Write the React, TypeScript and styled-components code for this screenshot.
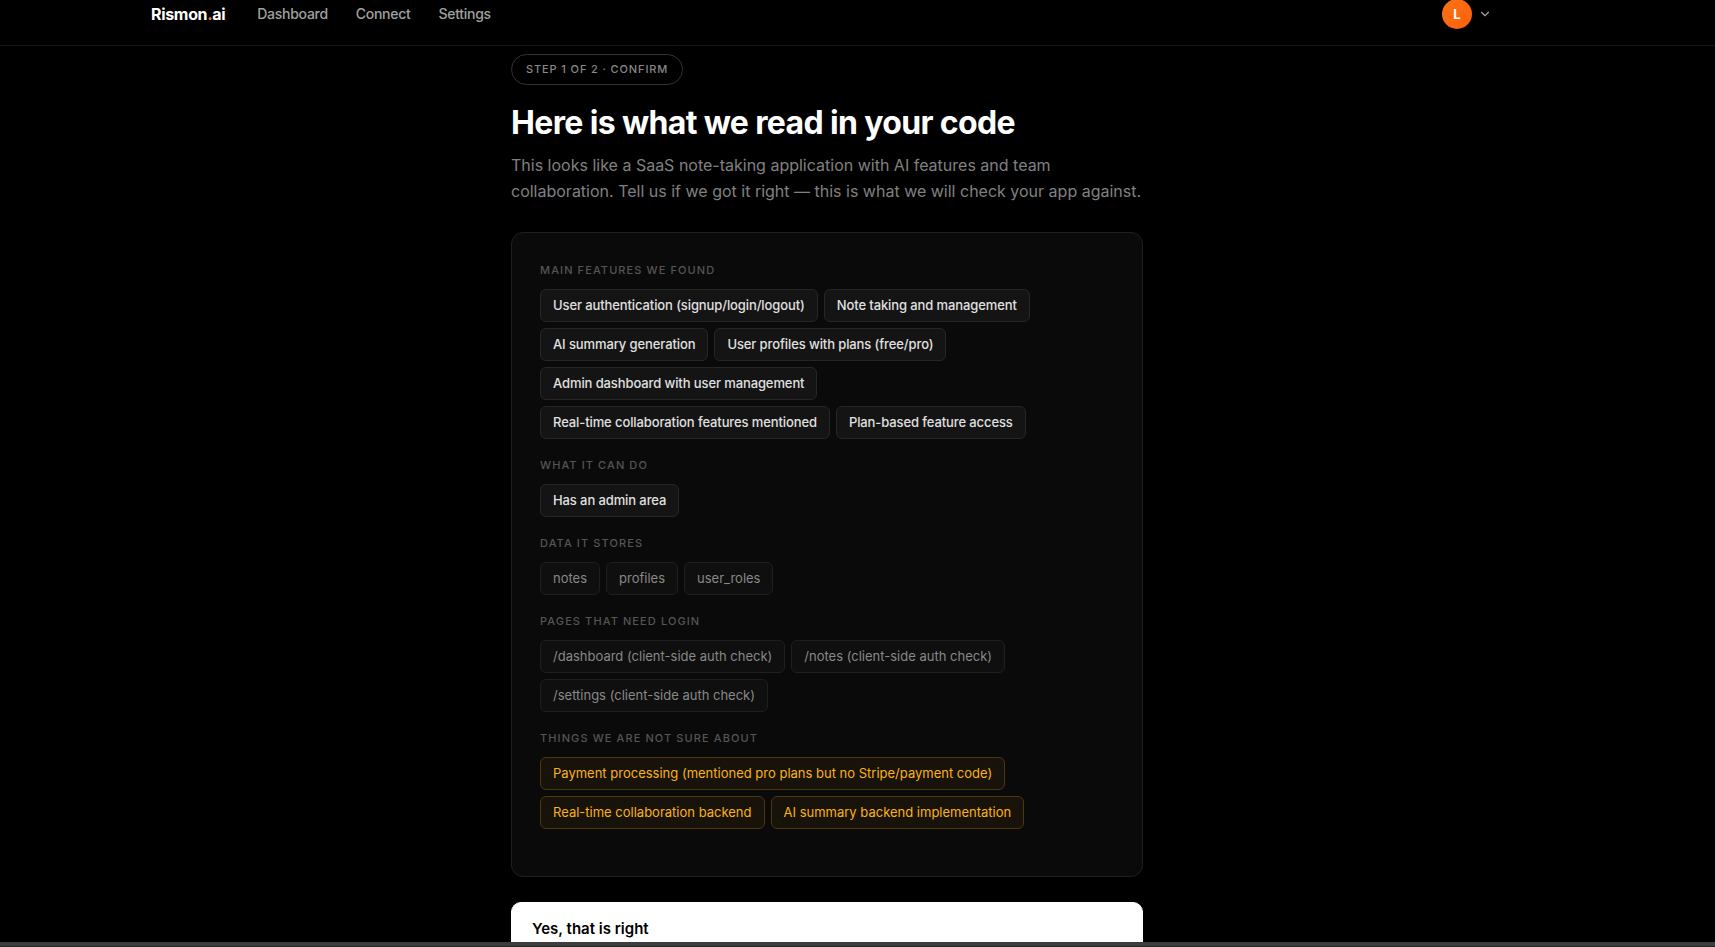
import React from "react";
import styled, { createGlobalStyle, css } from "styled-components";
import { ChevronDown } from "lucide-react";

const GlobalStyle = createGlobalStyle`
  *, *::before, *::after { box-sizing: border-box; }
  body {
    margin: 0;
    background: #000;
    color: #fff;
    font-family: Inter, "Liberation Sans", sans-serif;
  }
  button { font: inherit; cursor: pointer; }
`;

const Page = styled.div`
  display: grid;
  grid-template-rows: auto minmax(0, 1fr) auto;
  height: 100vh;
  overflow: hidden;
`;

const Header = styled.header`
  height: 46px;
  padding: 0 61px 17px 0;
  border-bottom: 1px solid #1a1a1a;
`;

const HeaderInner = styled.div`
  display: flex;
  align-items: center;
  height: 28px;
  max-width: 1400px;
  margin: 0 auto;
  padding: 0 24px;
`;

const Brand = styled.a`
  margin-right: 32px;
  color: #fff;
  font-size: 16px;
  font-weight: 700;
  letter-spacing: -0.02em;
  text-decoration: none;
`;

const BrandDot = styled.span`
  color: #f97316;
`;

const Nav = styled.nav`
  display: flex;
  gap: 28px;
  padding-bottom: 2px;
`;

const NavLink = styled.a`
  color: #a0a0a0;
  font-size: 14px;
  font-weight: 500;
  letter-spacing: -0.02em;
  text-decoration: none;
`;

const AccountButton = styled.button`
  display: flex;
  align-items: center;
  gap: 6px;
  margin-left: auto;
  padding: 0 11px 0 0;
  border: 0;
  background: none;
  color: #a0a0a0;
`;

const Avatar = styled.span`
  display: grid;
  place-items: center;
  width: 30px;
  height: 30px;
  border-radius: 50%;
  background: linear-gradient(135deg, #f97316, #ff5f0a);
  color: #fff;
  font-size: 13px;
  font-weight: 700;
`;

const Main = styled.main`
  overflow: hidden;
  padding: 8px 61px 0 0;
`;

const Content = styled.div`
  max-width: 680px;
  margin: 0 auto;
  padding: 0 24px;
`;

const StepBadge = styled.div`
  width: fit-content;
  margin-bottom: 20px;
  padding: 6px 14px;
  border: 1px solid #333;
  border-radius: 16px;
  color: #888;
  font-size: 11px;
  font-weight: 500;
  line-height: 17px;
  letter-spacing: 0.08em;
  text-transform: uppercase;
`;

const Title = styled.h1`
  margin: 0 0 11px;
  font-size: 32px;
  font-weight: 700;
  line-height: 36px;
  letter-spacing: -0.02em;
`;

const Lead = styled.p`
  margin: 0 0 28px;
  color: #808080;
  font-size: 16px;
  line-height: 26px;
`;

const Card = styled.div`
  margin-bottom: 25px;
  padding: 29px 28px;
  border: 1px solid #1f1f1f;
  border-radius: 12px;
  background: #0a0a0a;
`;

const Group = styled.section`
  margin-bottom: 18px;
`;

const GroupLabel = styled.h2`
  margin: 0 0 10px;
  color: #555;
  font-size: 11px;
  font-weight: 500;
  line-height: 17px;
  letter-spacing: 0.1em;
  text-transform: uppercase;
`;

const ChipList = styled.ul`
  display: flex;
  flex-wrap: wrap;
  gap: 6px;
  margin: 0;
  padding: 0 8px 0 0;
  list-style: none;
`;

type Tone = "strong" | "muted" | "warning";

const chipTones = {
  strong: css`
    border-color: #262626;
    background: #141414;
    color: #e0e0e0;
    font-weight: 500;
    letter-spacing: -0.008em;
  `,
  muted: css`
    border-color: #1f1f1f;
    background: #0f0f0f;
    color: #888;
  `,
  warning: css`
    border-color: #4d370b;
    background: #17120a;
    color: #fab414;
  `,
};

const Chip = styled.li<{ $tone: Tone }>`
  padding: 6px 12px;
  border: 1px solid;
  border-radius: 6px;
  font-size: 13px;
  line-height: 19px;
  ${({ $tone }) => chipTones[$tone]}
`;

const ConfirmButton = styled.button`
  display: block;
  width: 100%;
  padding: 16px 20px 40px;
  border: 1px solid #fff;
  border-radius: 10px;
  background: #fff;
  color: #000;
  font-size: 15px;
  font-weight: 600;
  line-height: 20px;
  text-align: left;
`;

const BottomBar = styled.footer`
  height: 5px;
  border-bottom: 1px solid #222;
  background: #3d3d3d;
`;

const groups: { label: string; tone: Tone; items: string[] }[] = [
  {
    label: "Main features we found",
    tone: "strong",
    items: [
      "User authentication (signup/login/logout)",
      "Note taking and management",
      "AI summary generation",
      "User profiles with plans (free/pro)",
      "Admin dashboard with user management",
      "Real-time collaboration features mentioned",
      "Plan-based feature access",
    ],
  },
  { label: "What it can do", tone: "strong", items: ["Has an admin area"] },
  { label: "Data it stores", tone: "muted", items: ["notes", "profiles", "user_roles"] },
  {
    label: "Pages that need login",
    tone: "muted",
    items: [
      "/dashboard (client-side auth check)",
      "/notes (client-side auth check)",
      "/settings (client-side auth check)",
    ],
  },
  {
    label: "Things we are not sure about",
    tone: "warning",
    items: [
      "Payment processing (mentioned pro plans but no Stripe/payment code)",
      "Real-time collaboration backend",
      "AI summary backend implementation",
    ],
  },
];

export default function App() {
  return (
    <Page>
      <GlobalStyle />
      <Header>
        <HeaderInner>
          <Brand href="#">
            Rismon<BrandDot>.</BrandDot>ai
          </Brand>
          <Nav>
            <NavLink href="#dashboard">Dashboard</NavLink>
            <NavLink href="#connect">Connect</NavLink>
            <NavLink href="#settings">Settings</NavLink>
          </Nav>
          <AccountButton type="button" aria-haspopup="menu">
            <Avatar>L</Avatar>
            <ChevronDown size={14} aria-hidden="true" />
          </AccountButton>
        </HeaderInner>
      </Header>
      <Main>
        <Content>
          <StepBadge>Step 1 of 2 · Confirm</StepBadge>
          <Title>Here is what we read in your code</Title>
          <Lead>
            This looks like a SaaS note-taking application with AI features and team collaboration.
            Tell us if we got it right — this is what we will check your app against.
          </Lead>
          <Card>
            {groups.map(({ label, tone, items }) => (
              <Group key={label}>
                <GroupLabel>{label}</GroupLabel>
                <ChipList>
                  {items.map((item) => (
                    <Chip key={item} $tone={tone}>
                      {item}
                    </Chip>
                  ))}
                </ChipList>
              </Group>
            ))}
          </Card>
          <ConfirmButton type="button">Yes, that is right</ConfirmButton>
        </Content>
      </Main>
      <BottomBar />
    </Page>
  );
}
